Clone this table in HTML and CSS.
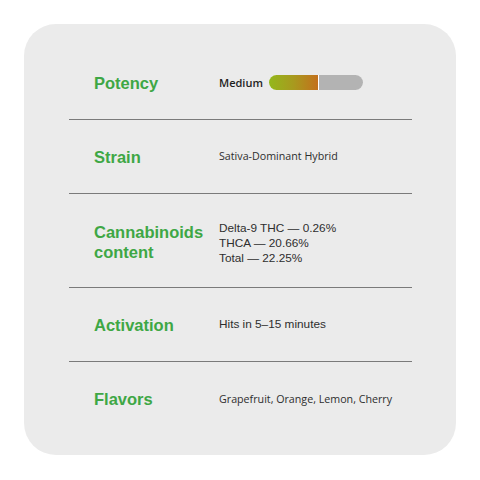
FILE: index.html
```html
<!DOCTYPE html>
<html>
<head>
<meta charset="utf-8">
<link rel="stylesheet" href="styles.css">
</head>
<body>
<div class="card">
  <div class="row">
    <div class="label">Potency</div>
    <div class="value potency">
      <span class="humanist medium">Medium</span>
      <span class="bar"><span class="fill"></span><span class="rest"></span></span>
    </div>
  </div>
  <div class="row">
    <div class="label">Strain</div>
    <div class="value humanist">Sativa-Dominant Hybrid</div>
  </div>
  <div class="row">
    <div class="label">Cannabinoids<br>content</div>
    <div class="value grotesk shifted">Delta-9 THC — 0.26%<br>THCA — 20.66%<br>Total — 22.25%</div>
  </div>
  <div class="row">
    <div class="label">Activation</div>
    <div class="value grotesk">Hits in 5–15 minutes</div>
  </div>
  <div class="row last">
    <div class="label">Flavors</div>
    <div class="value humanist">Grapefruit, Orange, Lemon, Cherry</div>
  </div>
</div>
</body>
</html>
```

FILE: styles.css
```css
html, body {
  margin: 0;
  padding: 0;
  background: #ffffff;
}
body {
  padding: 24px;
  width: 480px;
  height: 480px;
  box-sizing: border-box;
}
.card {
  width: 432px;
  height: 431px;
  box-sizing: border-box;
  background: #ebebeb;
  border-radius: 32px;
  padding: 22px 44px 19px 45px;
  display: flex;
  flex-direction: column;
}
.row {
  display: grid;
  grid-template-columns: 125px 1fr;
  align-items: center;
  padding: 24px 0 24px 25px;
  min-height: 74px;
  box-sizing: border-box;
  border-bottom: 1px solid #7a7a7a;
}
.row.last {
  border-bottom: none;
}
.label {
  font-family: "Liberation Sans", Arial, sans-serif;
  font-weight: bold;
  font-size: 16.5px;
  line-height: 20px;
  color: #3ea745;
}
.value {
  color: #2e2e2e;
}
.humanist {
  font-family: "Open Sans", sans-serif;
  font-size: 10.7px;
  line-height: 15px;
}
.grotesk {
  font-family: "Liberation Sans", Arial, sans-serif;
  font-size: 11.8px;
  line-height: 15px;
  color: #2e2e2e;
}
.shifted {
  padding-top: 3px;
}
.potency {
  display: flex;
  align-items: center;
  gap: 6px;
}
.medium {
  font-size: 11px;
  font-weight: 600;
  color: #1e1e1e;
}
.bar {
  display: flex;
  width: 94px;
  height: 15px;
  border-radius: 8px;
  overflow: hidden;
  gap: 1px;
  background: #ffffff;
}
.fill {
  width: 49px;
  background: linear-gradient(90deg, #93b81c 0%, #a89a1e 50%, #c3701c 100%);
}
.rest {
  flex: 1;
  background: #b3b3b3;
}
```
